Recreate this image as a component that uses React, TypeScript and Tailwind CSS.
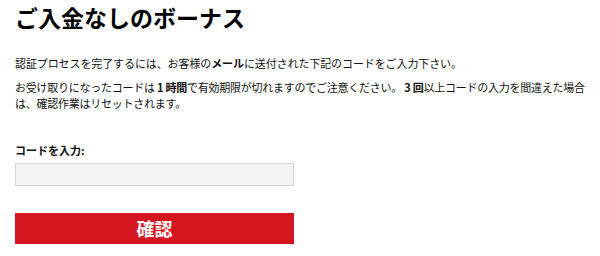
import React from 'react';

const App: React.FC = () => {
  return (
    <div className="w-[600px] h-[256px] bg-white pl-[15px] text-[#111] font-['Noto_Sans_CJK_JP',sans-serif] overflow-hidden">
      <h1 className="pt-[3px] text-[23px] leading-[28px] font-bold text-black">ご入金なしのボーナス</h1>

      <p className="mt-[24px] text-[11px] leading-[16px] tracking-[-0.1px]">
        認証プロセスを完了するには、お客様の<b>メール</b>に送付された下記のコードをご入力下さい。
      </p>
      <p className="mt-[8px] text-[11px] leading-[16px] tracking-[-0.25px]">
        <span className="whitespace-nowrap">
          お受け取りになったコードは <b>1 時間</b>で有効期限が切れますのでご注意ください。 <b>3 回</b>以上コードの入力を間違えた場合
        </span>
        <br />
        は、確認作業はリセットされます。
      </p>

      <div className="w-[279px] mt-[31px]">
        <label className="block text-[11px] leading-[16px] font-bold">コードを入力:</label>
        <input
          type="text"
          className="block mt-[5px] w-full h-[23px] bg-[#f4f4f4] border border-[#d4d4d4] outline-none"
        />
        <button className="mt-[27px] w-full h-[31px] bg-[#d5151f] text-white text-[18px] font-bold leading-[31px]">
          確認
        </button>
      </div>
    </div>
  );
};

export default App;
